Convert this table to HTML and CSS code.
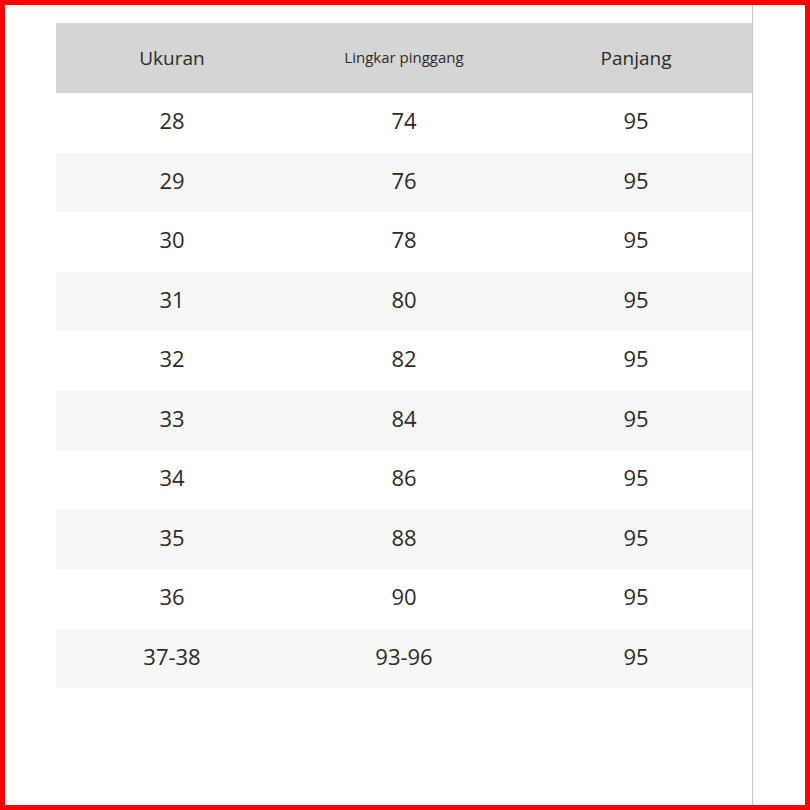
FILE: index.html
```html
<!DOCTYPE html>
<html>
<head>
<meta charset="utf-8">
<link rel="stylesheet" href="styles.css">
</head>
<body>
<div class="frame">
  <div class="panel">
    <div class="table">
      <div class="row head">
        <div class="cell">Ukuran</div>
        <div class="cell small">Lingkar pinggang</div>
        <div class="cell">Panjang</div>
      </div>
      <div class="row"><div class="cell">28</div><div class="cell">74</div><div class="cell">95</div></div>
      <div class="row alt"><div class="cell">29</div><div class="cell">76</div><div class="cell">95</div></div>
      <div class="row"><div class="cell">30</div><div class="cell">78</div><div class="cell">95</div></div>
      <div class="row alt"><div class="cell">31</div><div class="cell">80</div><div class="cell">95</div></div>
      <div class="row"><div class="cell">32</div><div class="cell">82</div><div class="cell">95</div></div>
      <div class="row alt"><div class="cell">33</div><div class="cell">84</div><div class="cell">95</div></div>
      <div class="row"><div class="cell">34</div><div class="cell">86</div><div class="cell">95</div></div>
      <div class="row alt"><div class="cell">35</div><div class="cell">88</div><div class="cell">95</div></div>
      <div class="row"><div class="cell">36</div><div class="cell">90</div><div class="cell">95</div></div>
      <div class="row alt"><div class="cell">37-38</div><div class="cell">93-96</div><div class="cell">95</div></div>
    </div>
  </div>
</div>
</body>
</html>
```
FILE: styles.css
```css
* { box-sizing: border-box; }
html, body { margin: 0; padding: 0; background: #fff; }
body { font-family: "Open Sans", "Noto Sans", sans-serif; color: #2b2b2b; }
.frame {
  width: 810px;
  height: 810px;
  border: 5px solid #f00;
  background: #fff;
}
.panel {
  width: 748px;
  height: 800px;
  border-right: 1px solid #c4c4c4;
  padding-top: 18px;
  padding-left: 51px;
}
.table {
  width: 696px;
  display: flex;
  flex-direction: column;
}
.row {
  display: grid;
  grid-template-columns: repeat(3, 1fr);
  height: 59.5px;
  align-items: center;
  font-size: 22px;
}
.row .cell { padding-bottom: 5px; }
.row.alt { background: #f7f7f7; }
.row.head {
  height: 70px;
  background: #d5d5d5;
  font-size: 19px;
}
.row.head .cell { padding-bottom: 0; }
.cell { text-align: center; }
.row.head .cell.small { font-size: 15px; padding-bottom: 2px; }
```
